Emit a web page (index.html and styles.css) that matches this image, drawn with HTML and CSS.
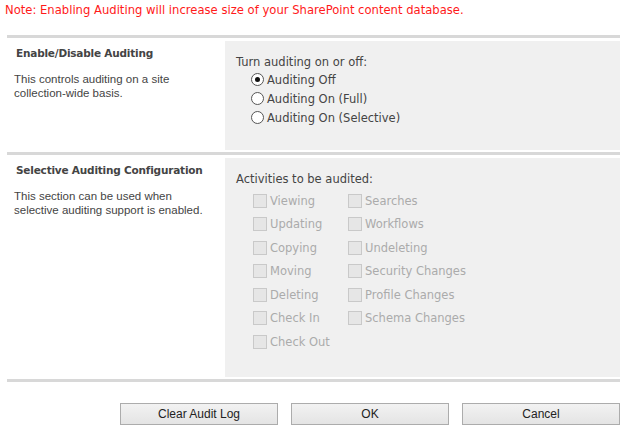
FILE: index.html
```html
<!DOCTYPE html>
<html>
<head>
<meta charset="utf-8">
<link rel="stylesheet" href="styles.css">
</head>
<body>
<div class="note">Note: Enabling Auditing will increase size of your SharePoint content database.</div>
<div class="form">
  <div class="sep"></div>
  <div class="section s1">
    <div class="left">
      <div class="title">Enable/Disable Auditing</div>
      <div class="desc">This controls auditing on a site collection-wide basis.</div>
    </div>
    <div class="right">
      <div class="label">Turn auditing on or off:</div>
      <div class="radios">
        <div class="radio"><span class="rb on"></span>Auditing Off</div>
        <div class="radio"><span class="rb"></span>Auditing On (Full)</div>
        <div class="radio"><span class="rb"></span>Auditing On (Selective)</div>
      </div>
    </div>
  </div>
  <div class="sep"></div>
  <div class="section s2">
    <div class="left">
      <div class="title">Selective Auditing Configuration</div>
      <div class="desc">This section can be used when selective auditing support is enabled.</div>
    </div>
    <div class="right">
      <div class="label">Activities to be audited:</div>
      <div class="checks">
        <div class="col c1">
          <div class="chk"><span class="cb"></span>Viewing</div>
          <div class="chk"><span class="cb"></span>Updating</div>
          <div class="chk"><span class="cb"></span>Copying</div>
          <div class="chk"><span class="cb"></span>Moving</div>
          <div class="chk"><span class="cb"></span>Deleting</div>
          <div class="chk"><span class="cb"></span>Check In</div>
          <div class="chk"><span class="cb"></span>Check Out</div>
        </div>
        <div class="col">
          <div class="chk"><span class="cb"></span>Searches</div>
          <div class="chk"><span class="cb"></span>Workflows</div>
          <div class="chk"><span class="cb"></span>Undeleting</div>
          <div class="chk"><span class="cb"></span>Security Changes</div>
          <div class="chk"><span class="cb"></span>Profile Changes</div>
          <div class="chk"><span class="cb"></span>Schema Changes</div>
        </div>
      </div>
    </div>
  </div>
  <div class="sep"></div>
  <div class="buttons">
    <button class="btn">Clear Audit Log</button>
    <button class="btn">OK</button>
    <button class="btn">Cancel</button>
  </div>
</div>
</body>
</html>
```
FILE: styles.css
```css
html, body {
  margin: 0;
  padding: 0;
  background: #ffffff;
}
body {
  width: 624px;
  height: 430px;
  overflow: hidden;
  font-family: "DejaVu Sans", Verdana, sans-serif;
}
.note {
  color: #ff1a1a;
  font-size: 11.6px;
  line-height: 14px;
  padding: 3px 0 0 5px;
  height: 15px;
}
.form {
  margin: 17px 4px 0 7px;
}
.sep {
  height: 3px;
  background: #d8d8d8;
}
.section {
  display: flex;
  margin: 3px 0 2px 0;
}
.s1 { height: 109px; }
.s2 { height: 219px; }
.left {
  width: 218px;
  padding: 5px 0 0 9px;
  box-sizing: border-box;
}
.title {
  font-family: "DejaVu Sans", Verdana, sans-serif;
  font-weight: bold;
  font-size: 10.5px;
  color: #444444;
  line-height: 14px;
  letter-spacing: -0.2px;
}
.desc {
  font-family: "Liberation Sans", Arial, sans-serif;
  font-size: 11.5px;
  color: #444444;
  line-height: 14px;
  margin-top: 12px;
  margin-left: -2px;
  width: 190px;
}
.right {
  flex: 1;
  background: #f0f0f0;
  padding: 14px 0 0 11px;
  color: #444444;
  font-size: 11.5px;
}
.label {
  line-height: 14px;
}
.radios {
  padding: 1px 0 0 14px;
}
.radio {
  display: flex;
  align-items: center;
  height: 19px;
}
.rb {
  width: 11px;
  height: 11px;
  border: 1px solid #555;
  border-radius: 50%;
  background: #fff;
  margin-right: 3px;
  margin-left: 1px;
  position: relative;
}
.rb.on::after {
  content: "";
  position: absolute;
  left: 3px;
  top: 3px;
  width: 5px;
  height: 5px;
  border-radius: 50%;
  background: #111;
}
.checks {
  display: flex;
  padding: 3px 0 0 17px;
}
.col.c1 {
  width: 95px;
}
.chk {
  display: flex;
  align-items: center;
  height: 23.5px;
  color: #ababab;
}
.cb {
  width: 12px;
  height: 12px;
  border: 1px solid #c9c9c9;
  background: #e6e6e6;
  margin-right: 3px;
}
.buttons {
  display: flex;
  justify-content: flex-end;
  gap: 13px;
  margin-top: 21px;
}
.btn {
  width: 158px;
  height: 22px;
  font-family: "Liberation Sans", Arial, sans-serif;
  font-size: 12px;
  color: #222;
  border: 1px solid #acacac;
  background: linear-gradient(#f2f2f2, #e4e4e4);
  padding: 0;
}
```
